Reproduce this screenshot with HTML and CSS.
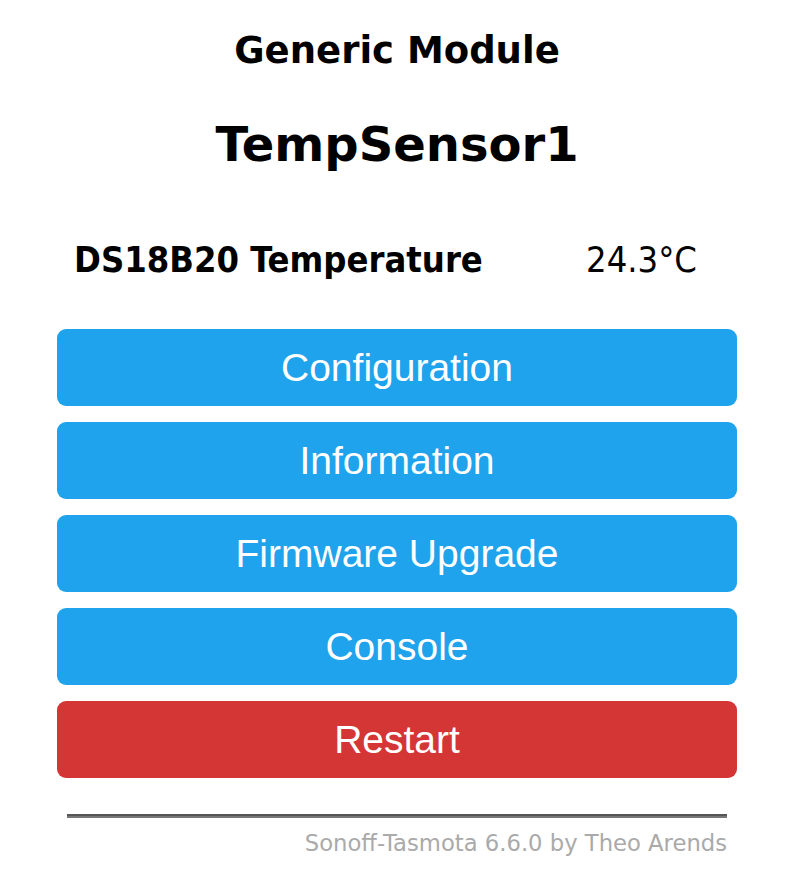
FILE: index.html
```html
<!DOCTYPE html>
<html>
<head>
<meta charset="utf-8">
<title>Generic Module - Main Menu</title>
<link rel="stylesheet" href="styles.css">
</head>
<body>
<div class="page">
  <div class="main">
    <h3 class="module">Generic Module</h3>
    <h2 class="device">TempSensor1</h2>
    <div class="sensor-row">
      <span class="sensor-name">DS18B20 Temperature</span>
      <span class="sensor-value">24.3°C</span>
    </div>
    <div class="buttons">
      <button class="btn">Configuration</button>
      <button class="btn">Information</button>
      <button class="btn">Firmware Upgrade</button>
      <button class="btn">Console</button>
      <button class="btn btn-red">Restart</button>
    </div>
    <div class="footer">
      <hr class="rule">
      <a class="credit" href="#">Sonoff-Tasmota 6.6.0 by Theo Arends</a>
    </div>
  </div>
</div>
</body>
</html>
```

FILE: styles.css
```css
html, body {
  margin: 0;
  padding: 0;
  background: #ffffff;
}
.page {
  display: flex;
  justify-content: center;
  padding-left: 4px;
}
.main {
  width: 680px;
  display: flex;
  flex-direction: column;
  font-family: "DejaVu Sans", Verdana, sans-serif;
  color: #000;
}
.module {
  margin: 29px 0 0 0;
  font-size: 37px;
  line-height: 44px;
  font-weight: bold;
  text-align: center;
}
.device {
  margin: 44px 0 0 0;
  font-size: 48px;
  line-height: 54px;
  font-weight: bold;
  text-align: center;
}
.sensor-row {
  margin-top: 67px;
  display: flex;
  align-items: baseline;
  padding: 0 40px 0 17px;
  font-family: "DejaVu Sans Condensed", "DejaVu Sans", sans-serif;
  font-stretch: condensed;
  font-size: 36px;
  line-height: 44px;
}
.sensor-name {
  font-weight: bold;
}
.sensor-value {
  margin-left: auto;
}
.buttons {
  margin-top: 47px;
  display: flex;
  flex-direction: column;
  gap: 16px;
}
.btn {
  display: block;
  width: 100%;
  height: 77px;
  border: 0;
  border-radius: 9px;
  background: #1fa3ec;
  color: #fff;
  font-family: "Liberation Sans", Arial, sans-serif;
  font-size: 39px;
  line-height: 77px;
  padding: 0;
  text-align: center;
}
.btn-red {
  background: #d43535;
}
.footer {
  display: flex;
  flex-direction: column;
  align-items: flex-end;
  padding: 0 10px;
  margin-top: 36px;
}
.rule {
  align-self: stretch;
  margin: 0;
  height: 0;
  border: 0;
  border-top: 2px solid #555;
  border-bottom: 2px solid #777;
}
.credit {
  margin-top: 12px;
  color: #aaa;
  text-decoration: none;
  font-family: "DejaVu Sans", Verdana, sans-serif;
  font-size: 22.7px;
  line-height: 26px;
}
```
